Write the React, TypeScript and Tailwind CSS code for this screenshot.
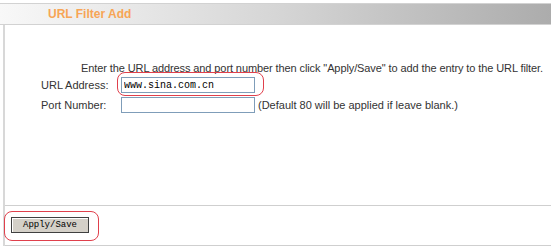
import React from "react";

const sans = "font-['Liberation_Sans',Arial,sans-serif]";
const mono = "font-['Liberation_Mono','Courier_New',monospace]";

function FieldRow({ label, children }: { label: string; children: React.ReactNode }) {
  return (
    <div className="flex items-center h-[16px] pl-[36px]">
      <span className="w-[80px] shrink-0 text-[11px] leading-[14px] text-[#333]">{label}</span>
      {children}
    </div>
  );
}

export default function App() {
  return (
    <div className={`w-[554px] h-[246px] bg-white overflow-hidden ${sans}`}>
      {/* title bar */}
      <div className="mt-[3px] w-[551px] h-[22px] border-y border-[#d2d2d2] bg-gradient-to-r from-[#f8f8f8] via-[#d6d6d6] to-[#acacac] flex items-center pl-[48px]">
        <span className="text-[12px] font-bold text-[#f7a556]">URL Filter Add</span>
      </div>

      <div className="ml-[3px] w-[548px] h-[221px] border-l-2 border-[#d8d8d8] flex flex-col">
        <div className="h-[180px] pt-[36px] flex flex-col">
          <p className="pl-[76px] text-[11px] leading-[14px] tracking-[-0.1px] text-[#333] whitespace-nowrap">
            Enter the URL address and port number then click "Apply/Save" to add the entry to the URL filter.
          </p>
          <div className="mt-[2px] flex flex-col gap-[4px]">
            <FieldRow label="URL Address:">
              <div className="relative w-[134px] h-[16px]">
                <input
                  defaultValue="www.sina.com.cn"
                  className={`block w-[134px] h-[16px] border border-[#7f9db9] px-[2px] text-[10px] text-black outline-none ${mono}`}
                />
                <div className="absolute left-[-4px] top-[-5px] w-[147px] h-[24px] rounded-[8px] border border-[#e0404c] pointer-events-none" />
              </div>
            </FieldRow>
            <FieldRow label="Port Number:">
              <input className={`block w-[134px] h-[16px] border border-[#7f9db9] px-[2px] text-[10px] outline-none ${mono}`} />
              <span className="ml-[3px] text-[11px] leading-[14px] text-[#333] whitespace-nowrap">
                (Default 80 will be applied if leave blank.)
              </span>
            </FieldRow>
          </div>
        </div>

        <div className="h-[41px] border-y border-[#cfcfcf] pt-[11px] pl-[6px]">
          <div className="relative w-[78px] h-[16px]">
            <button
              className={`block w-[78px] h-[16px] bg-[#d4d0c8] border border-[#404040] shadow-[inset_1px_1px_0_#fff] text-[9px] leading-[14px] text-black ${mono}`}
            >
              Apply/Save
            </button>
            <div className="absolute left-[-7px] top-[-6px] w-[95px] h-[30px] rounded-[8px] border border-[#e0404c] pointer-events-none" />
          </div>
        </div>
      </div>
    </div>
  );
}
